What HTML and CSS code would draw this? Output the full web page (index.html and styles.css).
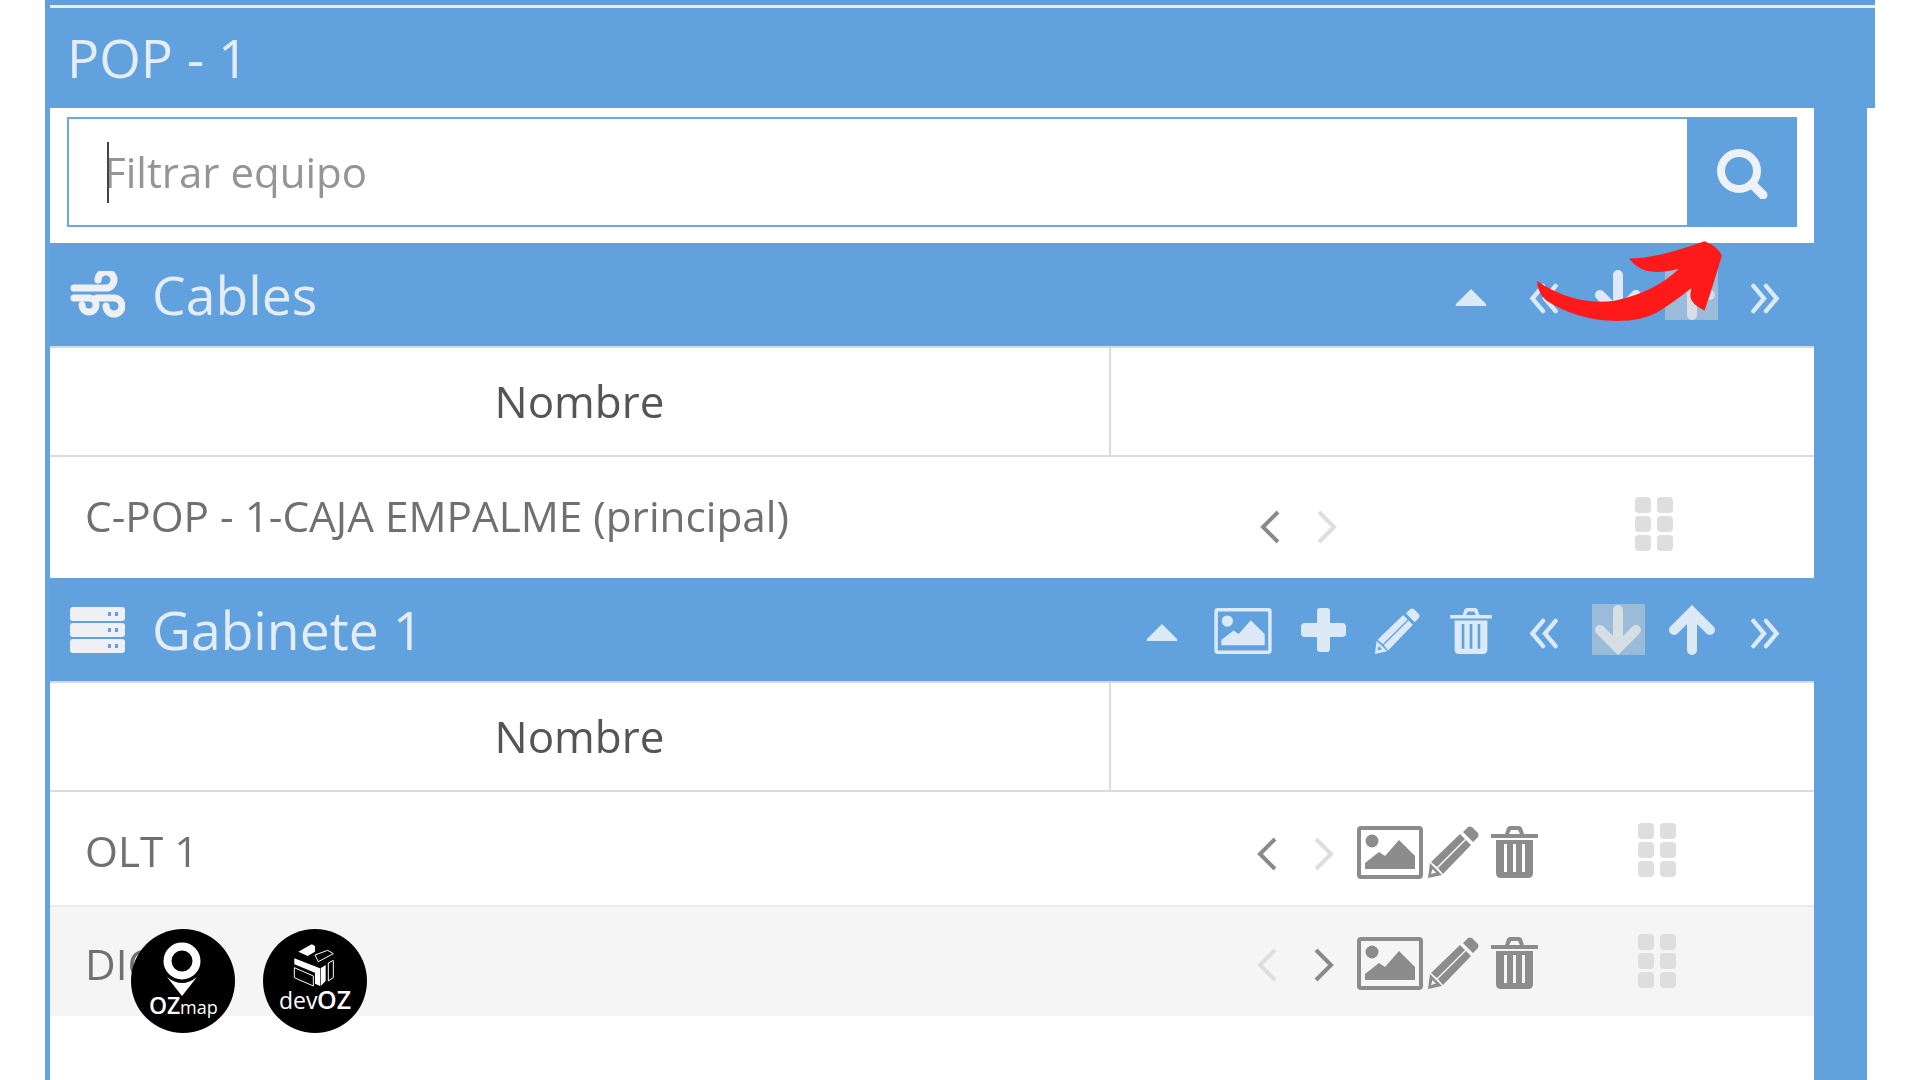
FILE: index.html
```html
<!DOCTYPE html>
<html lang="es">
<head>
<meta charset="utf-8">
<title>POP - 1</title>
<link rel="stylesheet" href="styles.css">
</head>
<body>
<svg class="defs" aria-hidden="true">
  <symbol id="i-caret" viewBox="0 0 32 18"><path d="M16 1 31 16Q32 18 30 18H2Q0 18 1 16Z" fill="currentColor"/></symbol>
  <symbol id="i-image" viewBox="0 0 66 53"><rect x="2" y="2" width="62" height="49" rx="2" fill="none" stroke="currentColor" stroke-width="4"/><circle cx="15" cy="15" r="6.5" fill="currentColor"/><path d="M8 43V37L22 26 28 30 42 14 58 30V43Z" fill="currentColor"/></symbol>
  <symbol id="i-plus" viewBox="0 0 45 44"><rect x="16" width="13" height="44" rx="3" fill="currentColor"/><rect y="15" width="45" height="14" rx="4" fill="currentColor"/></symbol>
  <symbol id="i-pencil" viewBox="0 0 52 52"><path d="M36 6 41 1Q43 0 45 1L51 7Q52 9 51 11L46 16Z M33 8 38 13 10 41 4 36Z M39 14 44 19 16 48 11 42Z M3 37 15 49 1 52Z M5.500 43 9 46.500 4 48Z" fill="currentColor" fill-rule="evenodd"/></symbol>
  <symbol id="i-trash" viewBox="0 0 47 52"><path d="M0 8H47V12H0Z M14 8 16 2Q17 0 19 0H28Q30 0 31 2L33 8H29L27 4H20L18 8Z M5 14H42V47Q42 52 37 52H10Q5 52 5 47Z M13 18V46H16V18Z M22 18V46H25V18Z M31 18V46H34V18Z" fill="currentColor" fill-rule="evenodd"/></symbol>
  <symbol id="i-dleft" viewBox="0 0 30 32"><path d="M14 3 3 16 14 29M27 3 16 16 27 29" fill="none" stroke="currentColor" stroke-width="4.500" stroke-linecap="round"/></symbol>
  <symbol id="i-dright" viewBox="0 0 30 32"><path d="M3 3 14 16 3 29M16 3 27 16 16 29" fill="none" stroke="currentColor" stroke-width="4.500" stroke-linecap="round"/></symbol>
  <symbol id="i-up" viewBox="0 0 50 50"><path d="M25 45V9M7 25 25 7 43 25" fill="none" stroke="currentColor" stroke-width="10" stroke-linecap="round"/></symbol>
  <symbol id="i-down" viewBox="0 0 50 50"><path d="M25 5V41M7 25 25 43 43 25" fill="none" stroke="currentColor" stroke-width="10" stroke-linecap="round"/></symbol>
  <symbol id="i-wind" viewBox="0 0 55 48"><path d="M4 17H36A8 8 0 1 0 28 9M4 27H19A7 7 0 1 1 12 34M27 27H44A8 8 0 1 1 36 35" fill="none" stroke="currentColor" stroke-width="7" stroke-linecap="round"/></symbol>
  <symbol id="i-server" viewBox="0 0 55 46"><path d="M3 0H52Q55 0 55 3V11Q55 14 52 14H3Q0 14 0 11V3Q0 0 3 0Z M3 16H52Q55 16 55 19V27Q55 30 52 30H3Q0 30 0 27V19Q0 16 3 16Z M3 32H52Q55 32 55 35V43Q55 46 52 46H3Q0 46 0 43V35Q0 32 3 32Z M38 5V9H41V5Z M45 5V9H48V5Z M38 21V25H41V21Z M45 21V25H48V21Z M38 37V41H41V37Z M45 37V41H48V37Z" fill="currentColor" fill-rule="evenodd"/></symbol>
  <symbol id="i-search" viewBox="0 0 52 50"><circle cx="23" cy="22" r="18" fill="none" stroke="currentColor" stroke-width="8"/><path d="M36 35 47 46" stroke="currentColor" stroke-width="9" stroke-linecap="round"/></symbol>
  <symbol id="i-left" viewBox="0 0 20 34"><path d="M18 2 3 17 18 32" fill="none" stroke="currentColor" stroke-width="4"/></symbol>
  <symbol id="i-right" viewBox="0 0 20 34"><path d="M2 2 17 17 2 32" fill="none" stroke="currentColor" stroke-width="4"/></symbol>
  <symbol id="i-grip" viewBox="0 0 38 54"><g fill="currentColor"><rect width="16" height="16" rx="4"/><rect x="22" width="16" height="16" rx="4"/><rect y="19" width="16" height="16" rx="4"/><rect x="22" y="19" width="16" height="16" rx="4"/><rect y="38" width="16" height="16" rx="4"/><rect x="22" y="38" width="16" height="16" rx="4"/></g></symbol>
</svg>

<div class="app">
  <div class="topline"><div class="topline-inner"></div></div>
  <div class="title">POP - 1</div>
  <div class="panel">
    <div class="filter-row">
      <div class="filter-field"><span class="text-caret"></span>Filtrar equipo</div>
      <div class="filter-btn"><svg class="ic-search"><use href="#i-search"/></svg></div>
    </div>

    <div class="section-head">
      <svg class="sec-icon wind"><use href="#i-wind"/></svg>
      <span class="sec-name">Cables</span>
      <div class="tools">
        <div class="tool"><svg class="ic-caret"><use href="#i-caret"/></svg></div>
        <div class="tool"><svg class="ic-dbl"><use href="#i-dleft"/></svg></div>
        <div class="tool"><span class="hl-none"><svg class="ic-arrow"><use href="#i-down"/></svg></span></div>
        <div class="tool"><span class="hl"><svg class="ic-arrow"><use href="#i-up"/></svg></span></div>
        <div class="tool"><svg class="ic-dbl"><use href="#i-dright"/></svg></div>
      </div>
    </div>
    <div class="thead"><div class="th">Nombre</div><div class="th th-empty"></div></div>
    <div class="row row-tall">
      <div class="cell-name">C-POP - 1-CAJA EMPALME (principal)</div>
      <div class="actions actions-short">
        <svg class="ic-chev dark"><use href="#i-left"/></svg>
        <svg class="ic-chev off"><use href="#i-right"/></svg>
        <svg class="ic-grip"><use href="#i-grip"/></svg>
      </div>
    </div>

    <div class="section-head">
      <svg class="sec-icon server"><use href="#i-server"/></svg>
      <span class="sec-name">Gabinete 1</span>
      <div class="tools">
        <div class="tool"><svg class="ic-caret"><use href="#i-caret"/></svg></div>
        <div class="tool tool-wide"><svg class="ic-himage"><use href="#i-image"/></svg></div>
        <div class="tool"><svg class="ic-plus"><use href="#i-plus"/></svg></div>
        <div class="tool"><svg class="ic-hpencil"><use href="#i-pencil"/></svg></div>
        <div class="tool"><svg class="ic-htrash"><use href="#i-trash"/></svg></div>
        <div class="tool"><svg class="ic-dbl"><use href="#i-dleft"/></svg></div>
        <div class="tool"><span class="hl"><svg class="ic-arrow"><use href="#i-down"/></svg></span></div>
        <div class="tool"><span class="hl-none"><svg class="ic-arrow"><use href="#i-up"/></svg></span></div>
        <div class="tool"><svg class="ic-dbl"><use href="#i-dright"/></svg></div>
      </div>
    </div>
    <div class="thead"><div class="th">Nombre</div><div class="th th-empty"></div></div>
    <div class="row row-olt">
      <div class="cell-name">OLT 1</div>
      <div class="actions">
        <svg class="ic-chev dark"><use href="#i-left"/></svg>
        <svg class="ic-chev off"><use href="#i-right"/></svg>
        <svg class="ic-rimage"><use href="#i-image"/></svg>
        <svg class="ic-rpencil"><use href="#i-pencil"/></svg>
        <svg class="ic-rtrash"><use href="#i-trash"/></svg>
        <svg class="ic-grip"><use href="#i-grip"/></svg>
      </div>
    </div>
    <div class="row row-dio">
      <div class="cell-name">DIO</div>
      <div class="actions">
        <svg class="ic-chev off"><use href="#i-left"/></svg>
        <svg class="ic-chev dark"><use href="#i-right"/></svg>
        <svg class="ic-rimage"><use href="#i-image"/></svg>
        <svg class="ic-rpencil"><use href="#i-pencil"/></svg>
        <svg class="ic-rtrash"><use href="#i-trash"/></svg>
        <svg class="ic-grip"><use href="#i-grip"/></svg>
      </div>
    </div>
  </div>
</div>

<svg class="red-arrow" viewBox="0 0 190 82"><path d="M3 43Q40 68 80 62 Q118 54 142 31 Q122 36 110 33 Q100 30 93 21 Q120 21 167 4 Q180 9 184 18 Q176 46 167 72 Q154 66 153 58 L154 50 Q135 65 120 74 Q104 83 76 82 Q40 80 12 62 Q3 54 3 43Z"/></svg>

<svg class="logo logo-oz" viewBox="0 0 104 104">
  <circle cx="52" cy="52" r="52"/>
  <circle class="lg-ring" cx="51" cy="32" r="14.500"/>
  <path class="lg-fill" d="M36 48Q51 60 66 48L51 67Z"/>
  <text class="lg-bold lg-oz" x="18" y="85">OZ</text>
  <text class="lg-light lg-map" x="49" y="85">map</text>
</svg>
<svg class="logo logo-dev" viewBox="0 0 104 104">
  <circle cx="52" cy="52" r="52"/>
  <g transform="translate(2 2) scale(.3333)">
    <path class="lg-fill" d="M100 62 140 40 150 45V62L128 75Z M88 82 165 112V165L150 158V125L88 100Z M167 112 182 102V150L167 165Z"/>
    <path class="lg-line" d="M150 72 188 58 205 68 160 92Z M88 110 145 135V165L88 140Z M190 96 205 88V140L190 150Z"/>
  </g>
  <text class="lg-light lg-dev" x="16" y="80">dev</text>
  <text class="lg-bold lg-devoz" x="54" y="80">OZ</text>
</svg>
</body>
</html>
```
FILE: styles.css
```css
* { box-sizing: border-box; }
html, body { margin: 0; height: 1080px; overflow: hidden; background: #fff; }
body { font-family: "Open Sans", "Liberation Sans", sans-serif; }
.defs { display: none; }
svg { display: block; flex: none; }

.app { margin-left: 45px; width: 1830px; filter: blur(.6px); }
.topline { height: 8px; background: #5f9fdc; padding: 5px 0 0 5px; }
.topline-inner { height: 3px; background: #e6f0fa; }
.title { height: 100px; background: #60a1de; color: #e4edf6; font-size: 53.500px; line-height: 100px; padding-left: 22px; }

.panel { width: 1822px; height: 972px; background: #fff; border-left: 5px solid #62a3e0; border-right: 53px solid #60a1de; }

.filter-row { display: flex; height: 135px; padding: 9px 17px 16px 17px; }
.filter-field { position: relative; flex: 1; display: flex; align-items: center; padding: 0 0 2px 35px; border: 2px solid #6aa8e4; border-right: 0; color: #959595; font-size: 42px; }
.text-caret { position: absolute; left: 38px; top: 23px; width: 2px; height: 61px; background: #444; }
.filter-btn { width: 110px; padding-top: 4px; display: flex; align-items: center; justify-content: center; background: #60a1de; }
.ic-search { width: 52px; height: 50px; color: #eef1f5; }

.section-head { height: 103px; display: flex; align-items: center; padding: 0 12px 0 20px; background: #60a1de; color: #dce9f6; }
.sec-icon { width: 55px; color: #eef0f3; }
.sec-icon.wind { height: 48px; }
.sec-icon.server { height: 46px; }
.sec-name { margin-left: 27px; font-size: 53.500px; color: #e4edf6; }
.tools { margin-left: auto; display: flex; align-items: center; }
.tool { width: 73.600px; height: 60px; display: flex; align-items: center; justify-content: center; }
.tool-wide { width: 88px; }
.ic-caret { width: 32px; height: 18px; margin-top: 5px; }
.ic-himage { width: 58px; height: 46px; margin-top: 3px; }
.ic-plus { width: 45px; height: 44px; }
.ic-hpencil { width: 46px; height: 46px; margin-top: 2px; }
.ic-htrash { width: 42px; height: 46px; margin-top: 3px; }
.ic-dbl { width: 30px; height: 31px; margin-top: 7px; }
.ic-arrow { width: 50px; height: 50px; }
.hl, .hl-none { width: 53px; height: 51px; display: flex; align-items: center; justify-content: center; }
.hl { background: #9bbcd9; color: #d6dee6; }

.thead { display: grid; grid-template-columns: 1059px 1fr; height: 111px; border-top: 2px solid #d4d9de; border-bottom: 2px solid #dcdcdc; }
.th { display: flex; align-items: center; justify-content: center; padding-bottom: 2px; font-size: 44px; color: #555; }
.th-empty { border-left: 2px solid #dcdcdc; }

.row { display: grid; grid-template-columns: 1059px 1fr; align-items: center; }
.row-tall { height: 121px; }
.row-olt { height: 115px; border-bottom: 2px solid #ececec; }
.row-dio { height: 109px; background: #f5f5f5; }
.cell-name { padding-left: 35px; font-size: 42.300px; color: #707070; }
.row-tall .cell-name { padding-bottom: 4px; }
.row-olt .cell-name { padding-top: 3px; }
.row-dio .cell-name { padding-top: 3px; }
.actions { display: flex; align-items: center; padding: 7px 138px 0 148px; color: #8c8c8c; }
.row-dio .actions { padding-top: 3px; }
.actions-short { padding: 15px 141px 0 151px; }
.ic-chev { width: 20px; height: 34px; margin: 3px 37px 0 0; }
.ic-chev + .ic-chev { margin-right: 23px; }
.ic-chev.dark { color: #8a8a8a; }
.ic-chev.off { color: #dedede; }
.ic-rimage { width: 66px; height: 53px; }
.ic-rpencil { width: 52px; height: 52px; margin-left: 4px; }
.ic-rtrash { width: 47px; height: 52px; margin-left: 12px; }
.ic-grip { width: 38px; height: 54px; margin: -4px 0 0 auto; color: #dedede; }
.actions-short .ic-grip { margin-top: -3px; }

.red-arrow { position: absolute; left: 1534px; top: 237px; width: 194px; height: 84px; fill: #ff1a1a; }
.logo { position: absolute; top: 929px; width: 104px; height: 104px; fill: #000; }
.logo-oz { left: 131px; }
.logo-dev { left: 263px; }
.lg-ring { fill: none; stroke: #fff; stroke-width: 8; }
.lg-fill { fill: #fff; }
.lg-line { fill: none; stroke: #fff; stroke-width: 3; }
.lg-bold { fill: #fff; font-weight: 600; font-family: "Open Sans", sans-serif; }
.lg-light { fill: #fff; font-weight: 400; font-family: "Open Sans", sans-serif; }
.lg-oz { font-size: 23px; }
.lg-map { font-size: 18px; }
.lg-dev { font-size: 23px; }
.lg-devoz { font-size: 25px; }
```
